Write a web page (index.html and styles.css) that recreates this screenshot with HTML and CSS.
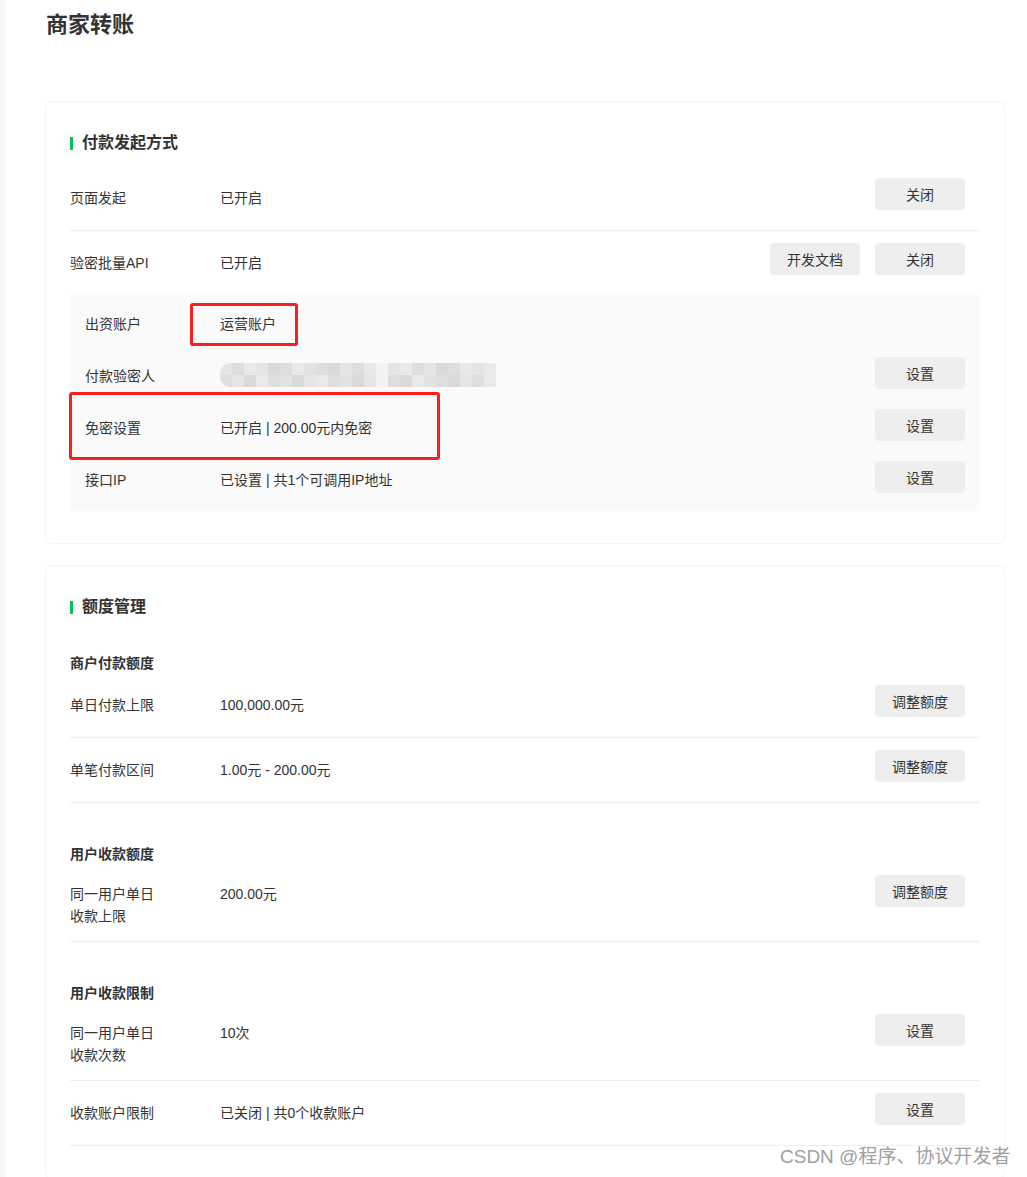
FILE: index.html
```html
<!DOCTYPE html>
<html lang="zh-CN">
<head>
<meta charset="utf-8">
<title>商家转账</title>
<link rel="stylesheet" href="styles.css">
</head>
<body>
<div class="page">
  <h1 class="title">商家转账</h1>

  <section class="card card-first">
    <h2 class="heading">付款发起方式</h2>

    <div class="row">
      <div class="label">页面发起</div>
      <div class="value">已开启</div>
      <div class="btns"><button class="btn">关闭</button></div>
    </div>
    <div class="row no-line">
      <div class="label">验密批量API</div>
      <div class="value">已开启</div>
      <div class="btns"><button class="btn">开发文档</button><button class="btn">关闭</button></div>
    </div>

    <div class="panel">
      <div class="prow">
        <div class="label">出资账户</div>
        <div class="value mark-wrap">运营账户<span class="mark mark-small"></span></div>
      </div>
      <div class="prow">
        <div class="label">付款验密人</div>
        <div class="value">
          <div class="blur">
            <span class="c1"></span><span class="c2"></span><span class="c3"></span><span class="c1"></span><span class="c4"></span><span class="c2"></span><span class="c3"></span><span class="c5"></span><span class="c2"></span><span class="c4"></span><span class="c1"></span><span class="c2"></span><span class="c3"></span><span class="c6"></span><span class="c1"></span><span class="c3"></span><span class="c2"></span><span class="c1"></span><span class="c4"></span><span class="c2"></span><span class="c3"></span><span class="c1"></span><span class="c3"></span>
            <span class="c2"></span><span class="c1"></span><span class="c4"></span><span class="c3"></span><span class="c2"></span><span class="c5"></span><span class="c4"></span><span class="c1"></span><span class="c3"></span><span class="c2"></span><span class="c5"></span><span class="c4"></span><span class="c1"></span><span class="c6"></span><span class="c2"></span><span class="c4"></span><span class="c3"></span><span class="c5"></span><span class="c2"></span><span class="c4"></span><span class="c1"></span><span class="c2"></span><span class="c3"></span>
          </div>
        </div>
        <div class="btns"><button class="btn">设置</button></div>
      </div>
      <div class="prow mark-wrap">
        <div class="label">免密设置</div>
        <div class="value">已开启 | 200.00元内免密</div>
        <div class="btns"><button class="btn">设置</button></div>
        <span class="mark mark-big"></span>
      </div>
      <div class="prow">
        <div class="label">接口IP</div>
        <div class="value">已设置 | 共1个可调用IP地址</div>
        <div class="btns"><button class="btn">设置</button></div>
      </div>
    </div>
  </section>

  <section class="card">
    <h2 class="heading">额度管理</h2>

    <h3 class="sub sub-first">商户付款额度</h3>
    <div class="row">
      <div class="label">单日付款上限</div>
      <div class="value">100,000.00元</div>
      <div class="btns"><button class="btn">调整额度</button></div>
    </div>
    <div class="row">
      <div class="label">单笔付款区间</div>
      <div class="value">1.00元 - 200.00元</div>
      <div class="btns"><button class="btn">调整额度</button></div>
    </div>

    <h3 class="sub">用户收款额度</h3>
    <div class="row tall">
      <div class="label">同一用户单日收款上限</div>
      <div class="value">200.00元</div>
      <div class="btns"><button class="btn">调整额度</button></div>
    </div>

    <h3 class="sub">用户收款限制</h3>
    <div class="row tall">
      <div class="label">同一用户单日收款次数</div>
      <div class="value">10次</div>
      <div class="btns"><button class="btn">设置</button></div>
    </div>
    <div class="row">
      <div class="label">收款账户限制</div>
      <div class="value">已关闭 | 共0个收款账户</div>
      <div class="btns"><button class="btn">设置</button></div>
    </div>
  </section>
</div>
<div class="watermark">CSDN @程序、协议开发者</div>
</body>
</html>
```

FILE: styles.css
```css
html, body {
  margin: 0;
  padding: 0;
  background: #ffffff;
}

body {
  font-family: "Liberation Sans", "Noto Sans CJK SC", sans-serif;
  font-size: 14px;
  color: #353535;
}

.page {
  border-left: 6px solid #f7f7f7;
  padding: 12px 0 40px 39px;
  min-height: 100vh;
  box-sizing: border-box;
}

.title {
  margin: 0 0 0 1px;
  font-size: 22px;
  line-height: 26px;
  font-weight: bold;
  color: #333333;
}

.card {
  width: 910px;
  border: 1px solid #f4f4f4;
  border-radius: 6px;
  padding: 30px 24px 32px;
  margin-top: 21px;
}

.card-first {
  margin-top: 63px;
}

.heading {
  margin: 0;
  display: flex;
  align-items: center;
  font-size: 16px;
  line-height: 22px;
  font-weight: bold;
  color: #333333;
}

.heading::before {
  content: "";
  width: 3px;
  height: 13px;
  background: #07c160;
  margin-right: 9px;
}

.heading + .row {
  margin-top: 12px;
}

.sub {
  margin: 41px 0 0;
  font-size: 14px;
  line-height: 20px;
  font-weight: bold;
  color: #333333;
}

.sub-first {
  margin-top: 35px;
}

.row {
  display: flex;
  align-items: flex-start;
  height: 64px;
  padding-right: 15px;
  border-bottom: 1px solid #eeeeee;
}

.row.no-line {
  border-bottom: none;
}

.row .label {
  width: 90px;
  margin-right: 60px;
  padding-top: 22px;
  line-height: 20px;
}

.row .value {
  padding-top: 22px;
  line-height: 20px;
  color: #333333;
}

.btns {
  margin-left: auto;
  margin-top: 12px;
  display: flex;
  gap: 15px;
}

.row.tall {
  height: 77px;
}

.row.tall .label,
.row.tall .value {
  padding-top: 19px;
  line-height: 22px;
}

.row.tall .btns {
  margin-top: 11px;
}

.btn {
  width: 90px;
  height: 32px;
  border: none;
  border-radius: 4px;
  background: #eeeeee;
  font-family: "Liberation Sans", "Noto Sans CJK SC", sans-serif;
  font-size: 14px;
  color: #333333;
  padding: 0;
  cursor: pointer;
}

.panel {
  background: #fafafa;
  border-radius: 4px;
  padding: 3px 15px 5px;
}

.prow {
  display: flex;
  align-items: flex-start;
  height: 52px;
}

.prow .label {
  width: 90px;
  margin-right: 45px;
  padding-top: 16px;
  line-height: 20px;
}

.prow .value {
  padding-top: 16px;
  line-height: 20px;
  color: #333333;
}

.prow .btns {
  margin-top: 7px;
}

.mark-wrap {
  position: relative;
}

.mark {
  position: absolute;
  border: 3px solid #fa1e1e;
  border-radius: 3px;
  box-sizing: border-box;
  pointer-events: none;
}

.mark-small {
  left: -30px;
  top: 5px;
  width: 108px;
  height: 43px;
}

.mark-big {
  left: -16px;
  top: -10px;
  width: 371px;
  height: 68px;
}

.blur {
  display: grid;
  grid-template-columns: repeat(23, 12px);
  grid-auto-rows: 12px;
  margin-top: -3px;
  border-radius: 10px 4px 4px 10px;
  overflow: hidden;
  width: 277px;
}

.blur span {
  display: block;
}

.blur .c1 { background: #e5e5e5; }
.blur .c2 { background: #dedede; }
.blur .c3 { background: #e9e9e9; }
.blur .c4 { background: #d9d9d9; }
.blur .c5 { background: #e0e2e6; }
.blur .c6 { background: #f2f2f2; }

.watermark {
  position: absolute;
  top: 1145px;
  left: 780px;
  font-family: "Liberation Sans", "Noto Sans CJK SC", sans-serif;
  font-size: 19px;
  line-height: 24px;
  color: #a0a0a0;
  white-space: nowrap;
  text-shadow: 0 0 1px #ffffff;
}
```
